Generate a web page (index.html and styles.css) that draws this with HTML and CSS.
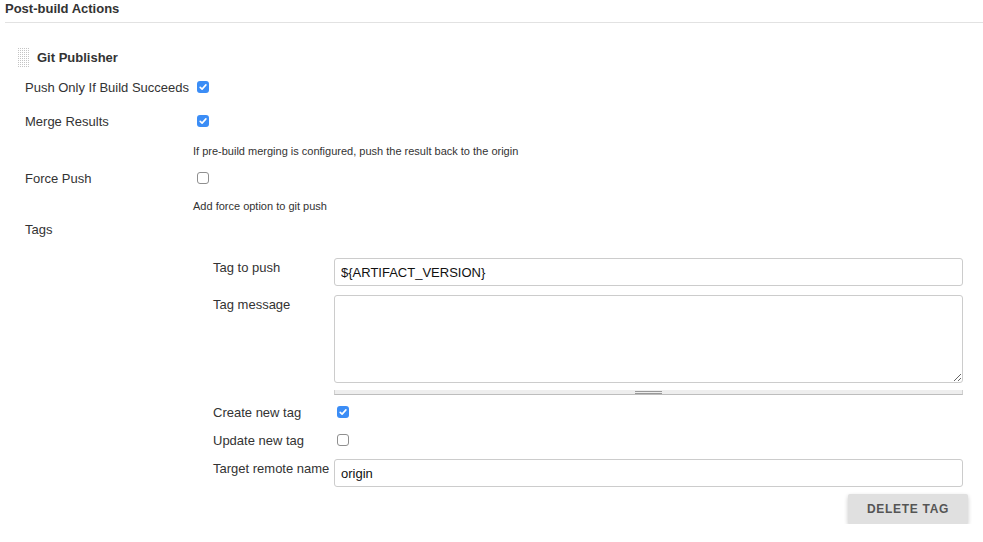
FILE: index.html
```html
<!DOCTYPE html>
<html>
<head>
<meta charset="utf-8">
<link rel="stylesheet" href="styles.css">
</head>
<body>
<div class="section-header">Post-build Actions</div>
<div class="publisher">
  <div class="pub-head">
    <svg class="handle" width="11" height="19" viewBox="0 0 11 19">
      <defs><pattern id="dots" width="2" height="2" patternUnits="userSpaceOnUse"><rect x="0" y="0" width="1" height="1" fill="#c4c4c4"/></pattern></defs>
      <rect width="11" height="19" fill="url(#dots)"/>
    </svg>
    <span class="pub-title">Git Publisher</span>
  </div>

  <div class="row r-push"><span class="lbl">Push Only If Build Succeeds</span><span class="cb on"><svg width="12" height="12" viewBox="0 0 12 12"><path d="M3.2 6.3 L5.1 8.1 L8.9 3.9" fill="none" stroke="#fff" stroke-width="1.6" stroke-linecap="round" stroke-linejoin="round"/></svg></span></div>
  <div class="row r-merge"><span class="lbl">Merge Results</span><span class="cb on"><svg width="12" height="12" viewBox="0 0 12 12"><path d="M3.2 6.3 L5.1 8.1 L8.9 3.9" fill="none" stroke="#fff" stroke-width="1.6" stroke-linecap="round" stroke-linejoin="round"/></svg></span></div>
  <div class="help h-merge">If pre-build merging is configured, push the result back to the origin</div>
  <div class="row r-force"><span class="lbl">Force Push</span><span class="cb"></span></div>
  <div class="help h-force">Add force option to git push</div>
  <div class="row r-tags"><span class="lbl">Tags</span></div>

  <div class="tags-block">
    <div class="nrow n-push">
      <span class="nlbl">Tag to push</span>
      <input class="text-in" type="text" value="${ARTIFACT_VERSION}">
    </div>
    <div class="nrow n-msg">
      <span class="nlbl">Tag message</span>
      <div class="msg-wrap">
        <textarea class="text-area"></textarea>
        <div class="expander"><span class="grip"></span></div>
      </div>
    </div>
    <div class="nrow n-create">
      <span class="nlbl">Create new tag</span>
      <span class="cb on ncb"><svg width="12" height="12" viewBox="0 0 12 12"><path d="M3.2 6.3 L5.1 8.1 L8.9 3.9" fill="none" stroke="#fff" stroke-width="1.6" stroke-linecap="round" stroke-linejoin="round"/></svg></span>
    </div>
    <div class="nrow n-update">
      <span class="nlbl">Update new tag</span>
      <span class="cb ncb"></span>
    </div>
    <div class="nrow n-remote">
      <span class="nlbl">Target remote name</span>
      <input class="text-in" type="text" value="origin">
    </div>
    <div class="btn-row">
      <button class="btn">DELETE TAG</button>
    </div>
  </div>
</div>
</body>
</html>
```

FILE: styles.css
```css
html { overflow: hidden; }
body {
  margin: 0;
  font-family: "Liberation Sans", Arial, sans-serif;
  font-size: 13px;
  color: #333;
  background: #fff;
}
.section-header {
  margin-left: 5px;
  height: 21px;
  padding-top: 1px;
  line-height: 16px;
  font-weight: bold;
  border-bottom: 1px solid #e2e2e2;
}
.pub-head {
  display: flex;
  align-items: center;
  height: 24px;
  margin-top: 22px;
  padding-left: 18px;
}
.handle { display: block; margin-right: 8px; }
.pub-title { font-weight: bold; }

.row {
  display: flex;
  align-items: center;
  height: 24px;
  padding-left: 25px;
}
.lbl { width: 168px; flex: none; }
.r-push { margin-top: 6px; }
.r-merge { margin-top: 10px; }
.r-force { margin-top: 7px; }
.r-tags { margin-top: 3px; }

.cb {
  display: block;
  box-sizing: border-box;
  width: 12px;
  height: 12px;
  margin-left: 4px;
  border: 1px solid #8f8f8f;
  border-radius: 3px;
  background: #fff;
}
.cb svg { display: block; }
.cb.on {
  border: none;
  background: #3b8df6;
}
.help {
  padding-left: 193px;
  height: 16px;
  line-height: 16px;
  font-size: 11px;
}
.h-merge { margin-top: 10px; }
.h-force { margin-top: 8px; }

.tags-block {
  margin-left: 213px;
  width: 750px;
  margin-top: 17px;
}
.nrow { display: flex; align-items: flex-start; }
.nlbl {
  width: 121px;
  flex: none;
  line-height: 16px;
  padding-top: 2px;
}
.text-in {
  box-sizing: border-box;
  width: 629px;
  height: 28px;
  margin: 0;
  padding: 0 6px;
  border: 1px solid #ccc;
  border-radius: 3px;
  font-family: "Liberation Sans", Arial, sans-serif;
  font-size: 13px;
  color: #111;
  outline: none;
}
.n-msg { margin-top: 9px; }
.msg-wrap { width: 629px; }
.text-area {
  display: block;
  box-sizing: border-box;
  width: 629px;
  height: 88px;
  margin: 0;
  border: 1px solid #ccc;
  border-radius: 3px;
  resize: vertical;
  font-family: "Liberation Sans", Arial, sans-serif;
  font-size: 13px;
}
.expander {
  box-sizing: border-box;
  margin-top: 7px;
  height: 5px;
  background: #eeeeee;
  border-bottom: 1px solid #bdbdbd;
  border-left: 1px solid #d0d0d0;
  border-right: 1px solid #d0d0d0;
  display: flex;
  justify-content: center;
}
.grip {
  display: block;
  width: 27px;
  height: 3px;
  margin-top: 1px;
  box-sizing: border-box;
  border-top: 1px solid #999;
  border-bottom: 1px solid #999;
}
.n-create { margin-top: 9px; align-items: center; }
.n-update { margin-top: 12px; align-items: center; }
.n-create .nlbl, .n-update .nlbl { padding-top: 1px; line-height: 15px; }
.ncb { margin-left: 3px; }
.n-remote { margin-top: 11px; }

.btn-row {
  display: flex;
  justify-content: flex-end;
  margin-top: 7px;
  margin-right: -5px;
}
.btn {
  width: 120px;
  height: 30px;
  border: none;
  border-radius: 2px;
  background: #e0e0e0;
  box-shadow: 0 2px 4px rgba(0, 0, 0, 0.22);
  font-family: "Liberation Sans", Arial, sans-serif;
  font-size: 12px;
  font-weight: bold;
  letter-spacing: 0.7px;
  color: #555;
  padding: 0;
}
```
